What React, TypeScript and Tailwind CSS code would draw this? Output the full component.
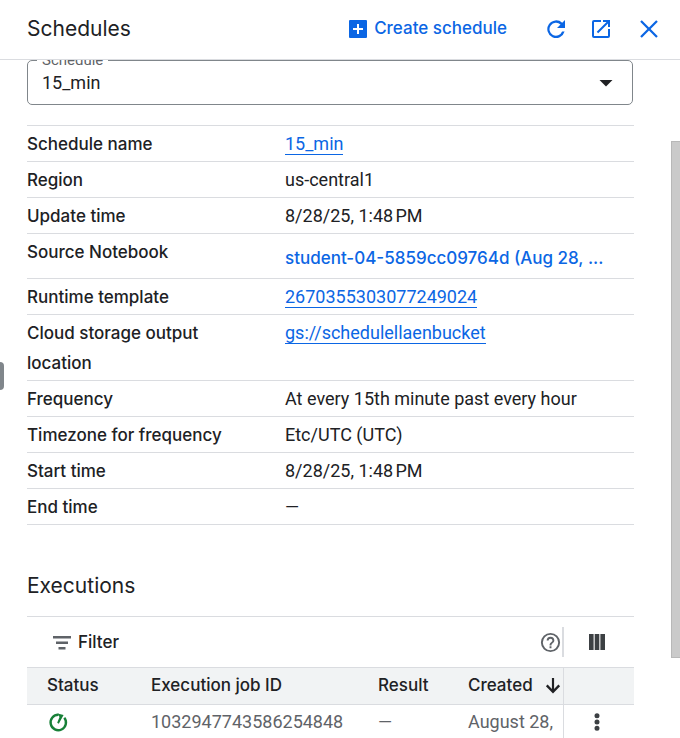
import type { ReactNode } from "react";

const details: { label: string; value: ReactNode; tall?: boolean }[] = [
  { label: "Schedule name", value: <DetailLink>15_min</DetailLink> },
  { label: "Region", value: "us-central1" },
  { label: "Update time", value: "8/28/25, 1:48\u202fPM" },
  {
    label: "Source Notebook",
    tall: true,
    value: (
      <a href="#notebook" className="font-[Inter,sans-serif] text-[17px] font-medium text-[#0b66e4]">
        student-04-5859cc09764d (Aug 28, ...
      </a>
    ),
  },
  { label: "Runtime template", value: <DetailLink>2670355303077249024</DetailLink> },
  { label: "Cloud storage output location", value: <DetailLink>gs://schedulellaenbucket</DetailLink> },
  { label: "Frequency", value: "At every 15th minute past every hour" },
  { label: "Timezone for frequency", value: "Etc/UTC (UTC)" },
  { label: "Start time", value: "8/28/25, 1:48\u202fPM" },
  { label: "End time", value: "—" },
];

function DetailLink({ children }: { children: string }) {
  return (
    <a href={"#" + children} className="border-b border-[#0b66e4] text-[#0b66e4]">
      {children}
    </a>
  );
}

function Icon({ d, size = 24, className = "" }: { d: string; size?: number; className?: string }) {
  return (
    <svg aria-hidden="true" width={size} height={size} viewBox="0 0 24 24" fill="currentColor" className={"block shrink-0 " + className}>
      <path d={d} />
    </svg>
  );
}

function Header() {
  return (
    <header className="flex h-[60px] shrink-0 items-center border-b border-[#dadce0] pr-[19px] pb-0.5 pl-[27px] text-[#0b66e4]">
      <h1 className="flex-1 text-[21px] text-[#202124]">Schedules</h1>
      <button type="button" className="flex items-center gap-1 text-[17px] font-medium">
        <Icon d="M4 3h16a1 1 0 0 1 1 1v16a1 1 0 0 1-1 1H4a1 1 0 0 1-1-1V4a1 1 0 0 1 1-1zM11 7v4H7v2h4v4h2v-4h4v-2h-4V7z" />
        Create schedule
      </button>
      <button type="button" aria-label="Refresh" className="ml-[37px]">
        <Icon d="M18.2 5.8A8.8 8.8 0 1 0 20.6 14.500h-2.500A6.500 6.500 0 1 1 16.500 7.500L13 11h8V3z" />
      </button>
      <button type="button" aria-label="Open in new window" className="ml-[21px]">
        <Icon d="M19 19H5V5h7V3H5a2 2 0 0 0-2 2v14a2 2 0 0 0 2 2h14a2 2 0 0 0 2-2v-7h-2zM14 3v2h3.59l-9.83 9.83 1.41 1.41L19 6.41V10h2V3z" />
      </button>
      <button type="button" aria-label="Close" className="ml-6">
        <Icon d="M20.8 4.8 19.2 3.2 12 10.400 4.800 3.200 3.200 4.800 10.400 12l-7.200 7.200 1.600 1.600L12 13.600l7.200 7.200 1.600-1.600L13.600 12z" />
      </button>
    </header>
  );
}

function ScheduleField() {
  return (
    <div className="relative mr-px h-[45px] rounded-[5px] border border-[#80868b]">
      <label htmlFor="schedule" className="absolute -top-2.5 left-[9px] bg-white px-[5px] text-[15px] leading-[18px] text-[#5f6368]">
        Schedule
      </label>
      <select id="schedule" defaultValue="15_min" className="h-full w-full appearance-none bg-transparent px-3.5 text-[18px] text-[#202124]">
        <option>15_min</option>
      </select>
      <Icon d="M5.5 9h13L12 15.5z" className="pointer-events-none absolute top-2.5 right-3.5 text-[#202124]" />
    </div>
  );
}

function Details() {
  return (
    <table className="mt-5 w-full table-fixed border-t border-[#dadce0] text-left leading-[30px]">
      <tbody>
        {details.map(({ label, value, tall }) => (
          <tr key={label} className="border-b border-[#dadce0] align-top">
            <th scope="row" className="w-[258px] pt-[3px] pr-10 pb-0.5 font-[Inter,sans-serif] text-[17px] font-medium">
              {label}
            </th>
            <td className={tall ? "pt-[9px] pb-[5px]" : "pt-[3px] pb-0.5"}>{value}</td>
          </tr>
        ))}
      </tbody>
    </table>
  );
}

function Executions() {
  return (
    <section>
      <h2 className="mt-[45px] font-[Inter,sans-serif] text-[21px] leading-8">Executions</h2>
      <div className="mt-3.5 flex h-[51px] items-center border-t border-[#dadce0] pl-[23px]">
        <button type="button" className="flex items-center gap-1 pt-0.5 font-[Inter,sans-serif] text-[17px] font-medium">
          <Icon d="M3 5h18v2.500H3zM6 10.500h12V13H6zM8.500 16h7v2.500h-7z" className="text-[#5f6368]" />
          Filter
        </button>
        <button type="button" aria-label="Help" className="ml-auto text-[#5f6368]">
          <Icon size={23} d="M11 18h2v-2h-2zM12 2a10 10 0 1 0 0 20 10 10 0 0 0 0-20m0 18a8 8 0 1 1 0-16 8 8 0 0 1 0 16m0-14a4 4 0 0 0-4 4h2a2 2 0 1 1 4 0c0 2-3 1.750-3 5h2c0-2.250 3-2.500 3-5a4 4 0 0 0-4-4" />
        </button>
        <div className="flex h-[30px] w-[72px] items-center justify-center border-l-2 border-[#dadce0] pr-1">
          <button type="button" aria-label="Column display options" className="text-[#3c4043]">
            <Icon d="M4 4h4.600v16H4zM9.700 4h4.600v16H9.700zM15.400 4H20v16h-4.600z" />
          </button>
        </div>
      </div>
      <table className="w-full table-fixed text-left whitespace-nowrap">
        <thead>
          <tr className="h-[37px] border-y border-[#dadce0] bg-[#f1f3f4] font-[Inter,sans-serif] text-[17px]">
            <th className="w-[104px] pl-5 font-medium">Status</th>
            <th className="pl-5 font-medium">Execution job ID</th>
            <th className="w-[90px] pl-5 font-medium">Result</th>
            <th className="w-[115px] border-r border-[#dadce0] pl-5 font-medium">
              <button type="button" className="flex w-full items-center justify-between">
                Created
                <Icon d="M10.700 2.500h2.600v13l5.200-5.200 2 2L12 21l-8.500-8.700 2-2 5.200 5.200z" size={20} />
              </button>
            </th>
            <th className="w-[71px]" aria-label="Actions" />
          </tr>
        </thead>
        <tbody>
          <tr className="h-[34px] text-[#5f6368]">
            <td className="pl-5">
              <svg role="img" aria-label="Running" width="22" height="22" viewBox="0 0 22 22" className="block text-[#188038]">
                <path d="M17.300 6.700A7.700 7.700 0 1 1 11.500 3.800" fill="none" stroke="currentColor" strokeWidth="2.4" />
                <path d="M10.500 2.600 16.600 4 11.800 12.800 10.200 11.800 12.500 6z" fill="currentColor" />
              </svg>
            </td>
            <td className="pl-5">1032947743586254848</td>
            <td className="pl-5">—</td>
            <td className="overflow-hidden border-r border-[#dadce0] pl-5">August 28,</td>
            <td className="pr-1">
              <button type="button" aria-label="More actions" className="mx-auto block text-[#3c4043]">
                <Icon d="M12 8.200a2.500 2.500 0 1 0 0-5 2.500 2.500 0 0 0 0 5m0 1.300a2.500 2.500 0 1 0 0 5 2.500 2.500 0 0 0 0-5m0 6.300a2.500 2.500 0 1 0 0 5 2.500 2.500 0 0 0 0-5" />
              </button>
            </td>
          </tr>
        </tbody>
      </table>
    </section>
  );
}

export default function App() {
  return (
    <div className="relative flex h-screen flex-col bg-white font-[Inter,sans-serif] text-[#202124]">
      <Header />
      <div className="flex min-h-0 flex-1 overflow-hidden">
        <main className="min-w-0 flex-1 pr-[37px] pl-[27px] font-[Roboto,sans-serif] text-[18px]">
          <ScheduleField />
          <Details />
          <Executions />
        </main>
        <div className="w-[9px] shrink-0 pt-[81px]">
          <div className="h-[517px] border border-r-0 border-[#b8b8b8] bg-[#cacaca]" />
        </div>
      </div>
      <div className="absolute top-[362px] left-0 h-7 w-1 rounded-r-sm bg-[#80868b]" />
    </div>
  );
}
